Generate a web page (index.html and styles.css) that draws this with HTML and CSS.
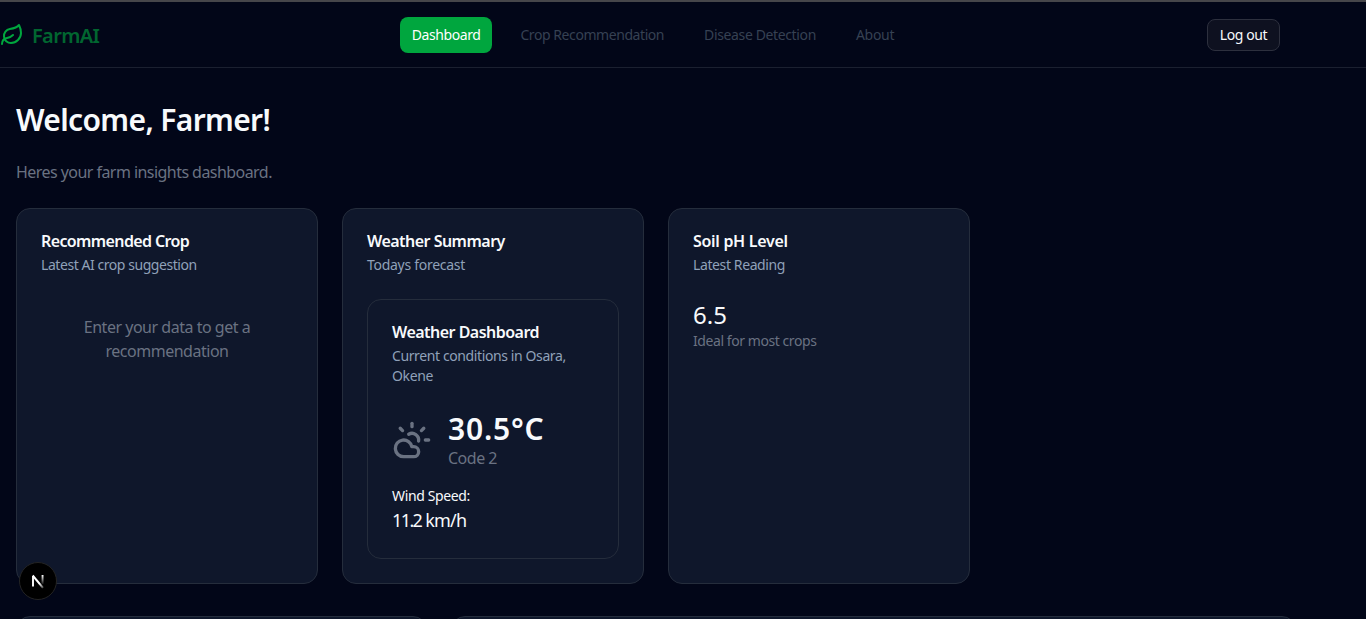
FILE: index.html
```html
<!DOCTYPE html>
<html lang="en">
<head>
<meta charset="utf-8">
<title>FarmAI</title>
<link rel="stylesheet" href="styles.css">
</head>
<body>
<header class="header">
  <div class="header-inner">
    <a class="brand">
      <svg class="leaf" viewBox="0 0 24 24"><path d="M11 20A7 7 0 0 1 9.800 6.100C15.500 5 17 4.480 19 2c1 2 2 4.180 2 8 0 5.500-4.780 10-10 10Z"/><path d="M2 21c0-3 1.850-5.360 5.080-6C9.500 14.520 12 13 13 12"/></svg>
      <span class="brand-name">FarmAI</span>
    </a>
    <nav class="nav">
      <a class="nav-link nav-active">Dashboard</a>
      <a class="nav-link">Crop Recommendation</a>
      <a class="nav-link nav-disease">Disease Detection</a>
      <a class="nav-link nav-about">About</a>
    </nav>
    <button class="logout">Log out</button>
  </div>
</header>
<main class="main">
  <h1 class="welcome">Welcome, Farmer!</h1>
  <p class="intro">Heres your farm insights dashboard.</p>
  <section class="grid grid-top">
    <article class="card">
      <h2 class="card-title title-crop">Recommended Crop</h2>
      <p class="card-desc desc-crop">Latest AI crop suggestion</p>
      <p class="empty">Enter your data to get a recommendation</p>
    </article>
    <article class="card">
      <h2 class="card-title">Weather Summary</h2>
      <p class="card-desc desc-today">Todays forecast</p>
      <div class="card card-inner">
        <h2 class="card-title">Weather Dashboard</h2>
        <p class="card-desc">Current conditions in Osara, Okene</p>
        <div class="weather">
          <svg class="cloud" viewBox="0 0 24 24"><path d="M12 2v2"/><path d="m4.930 4.930 1.410 1.410"/><path d="M20 12h2"/><path d="m19.070 4.930-1.410 1.410"/><path d="M15.947 12.650a4 4 0 0 0-5.925-4.128"/><path d="M13 22H7a5 5 0 1 1 4.900-6H13a3 3 0 0 1 0 6Z"/></svg>
          <div>
            <div class="temp">30.5°C</div>
            <div class="code">Code 2</div>
          </div>
        </div>
        <div class="wind-label">Wind Speed:</div>
        <div class="wind-value"><span class="wind-number">11.2</span> km/h</div>
      </div>
    </article>
    <article class="card">
      <h2 class="card-title title-soil">Soil pH Level</h2>
      <p class="card-desc">Latest Reading</p>
      <div class="ph">6.5</div>
      <p class="ph-note">Ideal for most crops</p>
    </article>
  </section>
  <section class="grid grid-bottom">
    <article class="card"></article>
    <article class="card wide"></article>
  </section>
</main>
<div class="dev-badge">
  <svg viewBox="0 0 36 36"><defs><linearGradient id="fade" x1="0" y1="0" x2="0" y2="1"><stop offset="0" stop-color="#fff"/><stop offset="1" stop-color="#fff" stop-opacity="0.1"/></linearGradient><linearGradient id="tail" gradientUnits="userSpaceOnUse" x1="18" y1="18" x2="24" y2="25"><stop offset="0.300" stop-color="#fff"/><stop offset="1" stop-color="#fff" stop-opacity="0.2"/></linearGradient></defs><path d="M13 23.500V13" fill="none" stroke="#fff" stroke-width="1.900"/><path d="M12.700 12.500L23 24.800" fill="none" stroke="url(#tail)" stroke-width="2"/><rect x="21.600" y="12" width="1.900" height="9" fill="url(#fade)"/></svg>
</div>
</body>
</html>
```
FILE: styles.css
```css
* { box-sizing: border-box; margin: 0; padding: 0; }
html { height: 100%; overflow: hidden; }
body {
  height: 619px;
  overflow: hidden;
  border-top: 2px solid #46464a;
  background: #020618;
  color: #f8fafc;
  font-family: "Noto Sans", sans-serif;
  font-size: 16px;
  line-height: 24px;
}
.header { height: 66px; border-bottom: 1px solid #1b2030; }
.header-inner {
  display: flex;
  align-items: center;
  justify-content: space-between;
  width: 1280px;
  height: 65px;
}
.brand { display: flex; align-items: center; gap: 8px; width: 99px; }
.leaf { flex: none; width: 24px; height: 24px; fill: none; stroke: #00a63e; stroke-width: 2; stroke-linecap: round; stroke-linejoin: round; }
.brand-name { padding-top: 2px; color: #016630; font-size: 20px; font-weight: 600; line-height: 28px; letter-spacing: -0.65px; white-space: nowrap; }
.nav { display: flex; gap: 16px; }
.nav-link { padding: 8px 12px; border-radius: 8px; color: #364153; font-size: 14px; line-height: 20px; letter-spacing: -0.43px; white-space: nowrap; }
.nav-active { background: #00a63e; color: #fff; }
.nav-disease { letter-spacing: -0.37px; }
.nav-about { letter-spacing: -0.3px; }
.logout {
  width: 73px;
  height: 32px;
  border: 1px solid #2d303e;
  border-radius: 8px;
  background: #0e1120;
  color: #f8fafc;
  font: 14px/20px "Noto Sans", sans-serif;
  letter-spacing: -0.4px;
  white-space: nowrap;
}
.main { width: 1312px; height: 551px; overflow: hidden; padding: 32px 16px 0; }
.welcome { height: 40px; font-size: 30px; font-weight: 600; line-height: 40px; letter-spacing: -0.65px; white-space: nowrap; }
.intro { margin: 20px 0 24px; color: #6a7282; letter-spacing: -0.55px; white-space: nowrap; }
.grid { display: grid; gap: 24px; }
.grid-top { grid-template-columns: repeat(4, 1fr); }
.grid-bottom { grid-template-columns: repeat(3, 1fr); margin-top: 32px; }
.grid-bottom .card { height: 300px; }
.wide { grid-column: span 2; }
.card { padding: 24px; border: 1px solid #252d3c; border-radius: 14px; background: #0f172b; }
.card-title { font-size: 16px; font-weight: 600; line-height: 16px; letter-spacing: -0.52px; white-space: nowrap; }
.title-crop { letter-spacing: -0.62px; }
.title-soil { letter-spacing: -0.3px; }
.card-desc { margin: 6px 0 24px; color: #90a1b9; font-size: 14px; line-height: 20px; letter-spacing: -0.39px; }
.desc-crop { letter-spacing: -0.44px; }
.desc-today { letter-spacing: -0.28px; }
.empty { padding: 16px; color: #6a7282; letter-spacing: -0.48px; text-align: center; }
.weather { display: flex; align-items: center; gap: 16px; margin-bottom: 16px; }
.cloud { width: 40px; height: 40px; fill: none; stroke: #6a7282; stroke-width: 2; stroke-linecap: round; stroke-linejoin: round; }
.temp { height: 36px; padding-top: 1px; font-size: 30px; font-weight: 600; line-height: 36px; letter-spacing: 0.8px; }
.code { color: #6a7282; letter-spacing: -0.5px; }
.wind-label { font-size: 14px; line-height: 20px; letter-spacing: -0.37px; }
.wind-value { font-size: 18px; line-height: 28px; letter-spacing: -0.8px; }
.wind-number { letter-spacing: -1.6px; }
.ph { font-size: 24px; line-height: 32px; }
.ph-note { color: #6a7282; font-size: 14px; line-height: 20px; letter-spacing: -0.43px; }
.dev-badge {
  position: fixed;
  left: 19px;
  bottom: 19px;
  width: 38px;
  height: 38px;
  border: 1px solid #242424;
  border-radius: 50%;
  background: #000;
}
.dev-badge svg { display: block; width: 36px; height: 36px; }
```
